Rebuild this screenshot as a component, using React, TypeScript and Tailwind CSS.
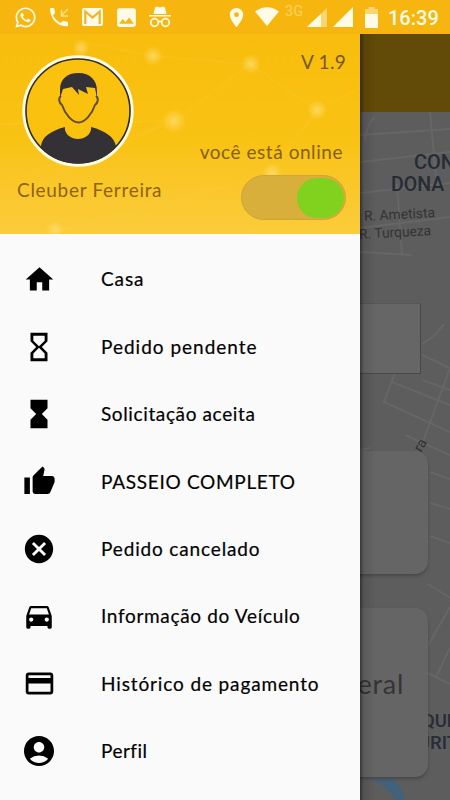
import type { ReactNode } from "react";
import { FaWhatsapp } from "react-icons/fa";
import {
  MdAccountCircle,
  MdCancel,
  MdDirectionsCar,
  MdHome,
  MdHourglassEmpty,
  MdHourglassFull,
  MdImage,
  MdPayment,
  MdPlace,
  MdThumbUp,
} from "react-icons/md";

type Item = { label: string; icon: ReactNode; tracking: string };

const items: Item[] = [
  { label: "Casa", icon: <MdHome size={33} />, tracking: "tracking-[0.9px]" },
  { label: "Pedido pendente", icon: <MdHourglassEmpty size={34} />, tracking: "tracking-[1px]" },
  { label: "Solicitação aceita", icon: <MdHourglassFull size={34} />, tracking: "tracking-[0.62px]" },
  { label: "PASSEIO COMPLETO", icon: <MdThumbUp size={33} />, tracking: "tracking-[0.7px]" },
  { label: "Pedido cancelado", icon: <MdCancel size={34} />, tracking: "tracking-[0.85px]" },
  { label: "Informação do Veículo", icon: <MdDirectionsCar size={34} />, tracking: "tracking-[0.67px]" },
  { label: "Histórico de pagamento", icon: <MdPayment size={33} />, tracking: "tracking-[0.87px]" },
  { label: "Perfil", icon: <MdAccountCircle size={36} />, tracking: "tracking-[0.5px]" },
];

function StatusBar() {
  return (
    <header className="flex h-[34px] shrink-0 items-center bg-[#f6b60f] text-[#fffbe6]">
      <FaWhatsapp className="ml-[14px]" size={23} />
      <svg className="ml-[12px]" width="21" height="21" viewBox="0 0 21 21" fill="none">
        <path d="M1 1h4l1.3 5-2.3 2.3c1.7 3.5 4.2 6 7.7 7.7l2.6-2.2 4.7 1.2v4C9 20.500 1 12 1 1z" fill="currentColor" />
        <path d="M19 2l-6.500 6.500M12.500 3v6H19" stroke="#fde08a" strokeWidth="1.500" />
      </svg>
      <svg className="ml-[12px]" width="21" height="18" viewBox="0 0 21 18">
        <rect width="21" height="18" rx="2" fill="currentColor" />
        <path d="M3.300 16V3.500l7.200 6 7.200-6V16" fill="none" stroke="#f0b52c" strokeWidth="2.200" />
      </svg>
      <MdImage className="ml-[11px]" size={25} />
      <svg className="ml-[9px]" width="24" height="22" viewBox="0 0 24 22" fill="none">
        <path d="M7 1.500l2-1 3 1 3-1 2 1L18.500 8h-13zM1 9h22v1.600H1z" fill="currentColor" />
        <circle cx="6.500" cy="16.500" r="3.800" stroke="currentColor" strokeWidth="1.800" />
        <circle cx="17.500" cy="16.500" r="3.800" stroke="currentColor" strokeWidth="1.800" />
        <path d="M10 16.200q2-1.600 4 0" stroke="currentColor" strokeWidth="1.600" />
      </svg>
      <MdPlace className="ml-[53px]" size={23} />
      <svg className="mb-px ml-[7px]" width="24" height="19" viewBox="0 0 24 19" fill="currentColor">
        <path d="M0 4.500Q12-4 24 4.500L12 19z" />
      </svg>
      <span className="mb-[9px] ml-[6px] w-[18px] font-['Roboto',sans-serif] text-[14.5px] leading-none text-[#fbd260]">3G</span>
      <svg className="ml-[4px]" width="20" height="19" viewBox="0 0 20 19">
        <path d="M20 0v19H0z" fill="#fbd571" />
        <path d="M14 5.700V19H0z" fill="currentColor" />
      </svg>
      <svg className="ml-[6px]" width="20" height="20" viewBox="0 0 20 20" fill="currentColor">
        <path d="M20 0v20H0z" />
      </svg>
      <svg className="ml-[12px]" width="13" height="21" viewBox="0 0 13 21">
        <path d="M3.500 0h6v2H13v6H0V2h3.500z" fill="#fbd571" />
        <path d="M0 7h13v14H0z" fill="currentColor" />
      </svg>
      <time className="ml-[10px] mt-[2px] whitespace-nowrap font-['Roboto',sans-serif] text-[20px] font-medium leading-none">16:39</time>
    </header>
  );
}

function Avatar() {
  return (
    <svg width="112" height="114" viewBox="0 0 112 114">
      <defs>
        <clipPath id="face">
          <circle cx="56" cy="57" r="52.500" />
        </clipPath>
      </defs>
      <circle cx="56" cy="57" r="54" fill="none" stroke="#fffbe0" strokeWidth="3.400" />
      <circle cx="56" cy="57" r="52" fill="#fac20e" stroke="#2f2c20" strokeWidth="1.600" />
      <g clipPath="url(#face)">
        <path d="M19 114V92c1-9 9-15 24-19-1 7 6 12 13 12s14-5 13-12c15 4 23 10 25 19v22z" fill="#333136" />
        <path
          d="M39 42C36 44 37 49 40 51 43 60 50 68.500 56.500 68.500S70 60 73 51c3-2 4-7 1-9"
          fill="none"
          stroke="#624d18"
          strokeWidth="2"
        />
        <path d="M38 44V36C38 25 45 19 56.500 19S75 26 75 37v7L73 34 64 33 66 40 56 35 57 41 50 33 41 35z" fill="#333136" />
      </g>
    </svg>
  );
}

function Glow() {
  return (
    <svg className="absolute inset-0" width="360" height="200" viewBox="0 0 360 200">
      <defs>
        <radialGradient id="spark">
          <stop offset="0" stopColor="#ffe17a" stopOpacity="0.7" />
          <stop offset="1" stopColor="#ffe17a" stopOpacity="0" />
        </radialGradient>
      </defs>
      <g stroke="#ffdc60" strokeWidth="2" opacity="0.1">
        <path d="M153 22L250 30 317 76 360 54M250 30L180 83 20 160M317 76L272 140 55 198M153 22L80 8M173 87L0 150M0 90L173 87" fill="none" />
      </g>
      <g fill="url(#spark)">
        <circle cx="153" cy="22" r="10" />
        <circle cx="251" cy="30" r="10" />
        <circle cx="317" cy="76" r="10" />
        <circle cx="174" cy="87" r="12" />
        <circle cx="272" cy="139" r="10" />
        <circle cx="55" cy="196" r="9" />
        <circle cx="81" cy="14" r="9" />
      </g>
    </svg>
  );
}

function DrawerHeader() {
  return (
    <div className="relative h-[200px] shrink-0 overflow-hidden bg-linear-to-b from-[#f8bd0c] via-[#f9c314] via-55% to-[#fbcc3a] font-['Lato',sans-serif]">
      <Glow />
      <div className="relative flex h-full justify-between">
        <div className="flex flex-col items-start pl-[17px] pt-[20px]">
          <div className="ml-[5px]">
            <Avatar />
          </div>
          <p className="mt-[10px] whitespace-nowrap text-[19px] leading-6 tracking-[0.7px] text-[#8d640b]">Cleuber Ferreira</p>
        </div>
        <div className="flex flex-col items-end pr-[14px] pt-[16px]">
          <p className="whitespace-nowrap text-[19px] leading-6 tracking-[0.3px] text-[#765713]">V 1.9</p>
          <p className="mr-[3px] mt-[66px] whitespace-nowrap text-[19px] leading-6 tracking-[0.55px] text-[#85600f]">você está online</p>
          <div className="mt-[11px] flex h-[45px] w-[105px] items-center justify-end rounded-full border border-[#d0a632] bg-[#d8af3b] pr-[1px]">
            <span className="h-[40px] w-[47px] rounded-full bg-[#80d21e]" />
          </div>
        </div>
      </div>
    </div>
  );
}

function MapRoads() {
  return (
    <svg className="absolute inset-0" width="90" height="688" viewBox="0 0 90 688" fill="none">
      <g stroke="#666666" strokeWidth="2">
        <path d="M0 23L90 17M0 50L90 40M0 81L90 71M0 116L90 105M0 140L52 143M70 0L76 65M15 5Q7 12 5 28M37 72L42 143" />
        <path d="M62 232L74 224 84 212M62 243L90 256M62 268L90 278M36 258L24 290 90 320M32 270L90 293M90 256L61 335M45 323L90 343M70 360L90 367M70 391L90 397M70 424L90 431" />
        <path d="M52 498L40 526M90 495L64 540M68 472L90 486M90 536L76 565M68 561L90 572M0 338L10 336" />
      </g>
      <path d="M0 664C17 667 28 676 36 688H45C42 676 36 666 27 665Z" fill="#42617a" />
    </svg>
  );
}

function MapBehind() {
  return (
    <section className="relative flex w-[90px] flex-col overflow-hidden bg-[#5d5d5d]">
      <div className="h-[78px] shrink-0 bg-[#624a08]" />
      <div className="relative flex-1 overflow-hidden font-['Roboto',sans-serif]">
        <MapRoads />
        <p className="absolute left-[54px] top-[38px] whitespace-nowrap text-[20px] font-medium leading-6 text-[#262b36]">CONJ.</p>
        <p className="absolute left-[31px] top-[61px] whitespace-nowrap text-[19.5px] font-medium leading-6 text-[#262b36]">DONA LI</p>
        <p className="absolute left-[4px] top-[92px] -rotate-3 whitespace-nowrap text-[13.8px] leading-5 text-[#343434]">R. Ametista</p>
        <p className="absolute -left-px top-[110px] -rotate-3 whitespace-nowrap text-[13.8px] leading-5 text-[#343434]">R. Turqueza</p>
        <div className="absolute -left-5 top-[191px] h-[71px] w-[81px] border border-[#484848] border-t-[#565656] bg-[#666]" />
        <p className="absolute left-[54px] top-[323px] -rotate-60 text-[14px] leading-5 text-[#303030]">ra</p>
        <div className="absolute -left-5 top-[339px] h-[123px] w-[88px] rounded-[13px] bg-[#656565] shadow-[0_2px_3px_#484848]" />
        <p className="absolute left-[62px] top-[597px] whitespace-nowrap text-[18.5px] font-medium leading-6 text-[#262c38]">QUE</p>
        <p className="absolute left-[58px] top-[619px] whitespace-nowrap text-[18.5px] font-medium leading-6 text-[#262c38]">URITI</p>
        <div className="absolute -left-5 top-[496px] flex h-[169px] w-[88px] items-center justify-end rounded-[13px] bg-[#656565] pb-[18px] pr-[24px] shadow-[0_2px_3px_#484848]">
          <span className="whitespace-nowrap font-['Lato',sans-serif] text-[27px] leading-8 tracking-[0.7px] text-[#353535]">Geral</span>
        </div>
      </div>
      <div className="absolute inset-y-0 left-0 w-[16px] bg-linear-to-r from-black/45 via-black/10 via-25% to-transparent" />
    </section>
  );
}

export default function App() {
  return (
    <div className="flex h-[800px] w-[450px] flex-col overflow-hidden">
      <StatusBar />
      <main className="flex min-h-0 flex-1">
        <aside className="flex w-[360px] shrink-0 flex-col bg-[#fafafa]">
          <DrawerHeader />
          <nav className="flex flex-col pt-[11.5px]">
            {items.map((item) => (
              <a key={item.label} className="flex h-[67.45px] items-center text-black">
                <span className="ml-[19px] flex w-[40px] justify-center">{item.icon}</span>
                <span
                  className={`ml-[42px] whitespace-nowrap font-['Lato',sans-serif] text-[19px] leading-6 [-webkit-text-stroke:0.2px_#111] ${item.tracking}`}
                >
                  {item.label}
                </span>
              </a>
            ))}
          </nav>
        </aside>
        <MapBehind />
      </main>
    </div>
  );
}
